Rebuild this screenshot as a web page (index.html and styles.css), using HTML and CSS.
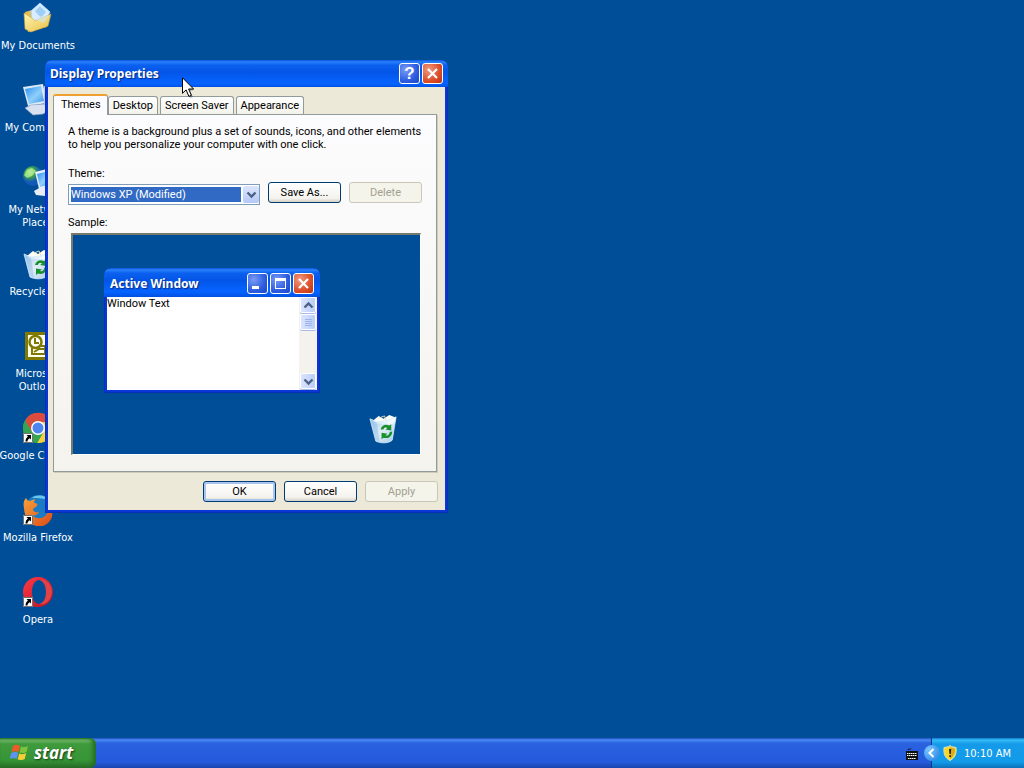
FILE: index.html
```html
<!DOCTYPE html>
<html lang="en">
<head>
<meta charset="utf-8">
<title>Display Properties</title>
<link rel="stylesheet" href="styles.css">
</head>
<body>
<svg class="defs" aria-hidden="true">
  <defs>
    <linearGradient id="screen" x1="0" y1="0" x2="1" y2="1"><stop offset="0" stop-color="#2b8cf0"/><stop offset=".55" stop-color="#8fd0fb"/><stop offset="1" stop-color="#3a90e6"/></linearGradient>
    <linearGradient id="folder" x1="0" y1="0" x2="1" y2="1"><stop offset="0" stop-color="#fff6b0"/><stop offset="1" stop-color="#eabf45"/></linearGradient>
    <linearGradient id="glass" x1="0" y1="0" x2="1" y2="1"><stop offset="0" stop-color="#a9d3f3"/><stop offset=".5" stop-color="#f4fbff"/><stop offset="1" stop-color="#b0d4ee"/></linearGradient>
    <radialGradient id="earth" cx=".35" cy=".3"><stop offset="0" stop-color="#b5f0a0"/><stop offset=".5" stop-color="#3fa04a"/><stop offset="1" stop-color="#1259b8"/></radialGradient>
    <linearGradient id="fox" x1="0" y1="0" x2="1" y2="1"><stop offset="0" stop-color="#f6a13a"/><stop offset="1" stop-color="#dc4a18"/></linearGradient>
    <linearGradient id="opera" x1="0" y1="0" x2="1" y2="1"><stop offset="0" stop-color="#ff3a48"/><stop offset="1" stop-color="#b80f22"/></linearGradient>
    <symbol id="shortcut" viewBox="0 0 10 10"><path d="M0 0h10v10H0z" fill="#fff"/><path d="M.5 .5h9v9h-9z" fill="none" stroke="#111" stroke-width=".6"/><path d="M3.500 2h4.500v4.500L6.700 5.200C5 6 4.600 7 4.500 8.500H2.500C2.500 6 3.500 4.500 4.900 3.400z" fill="#000"/></symbol>
    <symbol id="bin" viewBox="0 0 32 32">
      <path d="M5 8l6-5 5 3 6-4 7 3-2 6H6z" fill="#fffef4"/>
      <path d="M12 5l5-2 2 5" stroke="#e6d7b5" fill="none"/>
      <path d="M2 6l7 3 9-1 11-4-4 24c-3 3-11 4-17 1z" fill="url(#glass)" fill-opacity=".92" stroke="#d6efff" stroke-width=".8"/>
      <path d="M3 7l5 21 4 2-3-20z" fill="#80b5e0" opacity=".4"/>
      <path d="M13 17c1-4 5-6 9-4l2-1.500v6.500l-6-1 2-1.500c-2-1-3.500-.5-4 1.500zM25 19c0 5-4 8-9 6.500L14 27v-6.500l6 1-2 1.500c2 .8 4-.5 4.500-3.500z" fill="#18902c"/>
    </symbol>
    <symbol id="cross" viewBox="0 0 19 19"><path d="M5 5l9 9M14 5l-9 9" stroke="#fff" stroke-width="2.200" fill="none"/></symbol>
    <symbol id="down" viewBox="0 0 13 13"><path d="M2.500 4.500l4 4 4-4" fill="none" stroke="#4d6185" stroke-width="2.400"/></symbol>
    <symbol id="up" viewBox="0 0 13 13"><path d="M2.500 8.500l4-4 4 4" fill="none" stroke="#4d6185" stroke-width="2.400"/></symbol>
  </defs>
</svg>
<div class="screen">
  <main class="desktop">
    <nav class="icons" aria-label="Desktop">
      <a class="icon" href="#documents">
        <svg viewBox="0 0 32 32"><path d="M3 10l7-2 3 3 13-4-1 18L6 30z" fill="#e8bd4b"/><path d="M9 9l9-8 10 9-8 14-10-3z" fill="#d8edff" stroke="#a8d0f4"/><path d="M13 9l5-5 6 6-5 6z" fill="#9fcdf6"/><path d="M2 11l8 5 3 3 16-7-3 12-17 6-6-3z" fill="url(#folder)" stroke="#cfa337" stroke-width=".6"/><path d="M11 17l8-3 8-1-5 8z" fill="#d3e7f4" opacity=".6"/></svg>
        <span>My Documents</span>
      </a>
      <a class="icon" href="#computer">
        <svg viewBox="0 0 32 32"><path d="M1 3l20-3 4 19-19 3z" fill="#dceaf7"/><path d="M3 5l16-3 3 15-15 3z" fill="url(#screen)"/><path d="M3 24l6-3 13-1 7 5-8 5-10 1z" fill="#d9e1f0" stroke="#8ea4c4" stroke-width=".6"/><path d="M22 2l6 2v20l-6-4z" fill="#b9c9df"/></svg>
        <span>My Computer</span>
      </a>
      <a class="icon" href="#network">
        <svg viewBox="0 0 32 32"><circle cx="11" cy="10" r="10" fill="url(#earth)"/><path d="M5 4l5-2 4 3-4 5-5 2-3-3z" fill="#b1ee93" opacity=".8"/><path d="M13 6l16-4 2 18-14 3z" fill="#e4f0fb"/><path d="M15 8l12-3 2 13-11 3z" fill="url(#screen)"/><path d="M12 25l7-4 10 1 2 5-8 3-9-1z" fill="#e8ecf7"/></svg>
        <span>My Network Places</span>
      </a>
      <a class="icon" href="#bin">
        <svg viewBox="0 0 32 32"><use href="#bin"/></svg>
        <span>Recycle Bin</span>
      </a>
      <a class="icon" href="#outlook">
        <svg viewBox="0 0 32 32"><path d="M3 2h28v28H3z" fill="#807a00"/><path d="M6 5h22v22H6z" fill="#fffff0"/><circle cx="13.500" cy="12" r="6" fill="#fff" stroke="#807a00" stroke-width="2.500"/><path d="M13 8v5h4" fill="none" stroke="#807a00" stroke-width="2"/><path d="M10 18v6h13v-8h-4M12 22l5-3h8" fill="none" stroke="#807a00" stroke-width="2"/></svg>
        <span>Microsoft Outlook</span>
      </a>
      <a class="icon" href="#chrome">
        <svg viewBox="0 0 32 32"><circle cx="16" cy="16" r="15" fill="#35a552"/><path d="M3 8.500A15 15 0 0 1 30 10H16z" fill="#dd4b3e"/><path d="M3 8.500L10 20l6-10z" fill="#dd4b3e"/><path d="M30 10H17l5 9-7 12A15 15 0 0 0 30 10z" fill="#f9cf3e"/><path d="M3 8.500A15 15 0 0 0 15 31l6-10-11 0z" fill="#35a552"/><circle cx="16" cy="16" r="7" fill="#fff"/><circle cx="16" cy="16" r="5.500" fill="#4d86ee"/><use href="#shortcut" x="1" y="21" width="10" height="10"/></svg>
        <span>Google Chrome</span>
      </a>
      <a class="icon" href="#firefox">
        <svg viewBox="0 0 32 32"><circle cx="17" cy="15" r="14" fill="#1b7cc4"/><path d="M10 4c5-4 14-3 17 3-5-3-10-3-17-3z" fill="#69c7ec"/><path d="M2 14C1 9 2 6 4 4c1 2 2 3 4 3l5-2-1 4c3 0 4 1 3 3l-4 3c0 2 2 4 6 3-1 3-5 4-7 3 4 5 12 4 15-1 2-4 2-7 1-10 5 5 6 13 1 18-8 9-24 4-25-14z" fill="url(#fox)"/><use href="#shortcut" x="1" y="21" width="10" height="10"/></svg>
        <span>Mozilla Firefox</span>
      </a>
      <a class="icon" href="#opera">
        <svg viewBox="0 0 32 32"><path fill-rule="evenodd" d="M16 1C7 1 1 8 1 16s6 15 15 15 15-7 15-15S25 1 16 1zm1 3c4 0 7 5 7 12s-3 12-7 12-7-5-7-12 3-12 7-12z" fill="url(#opera)"/><path d="M17 4c6-2 13 4 13 12s-7 14-13 12c5-1 7-6 7-12s-2-11-7-12z" fill="#e14248"/><use href="#shortcut" x="1" y="21" width="10" height="10"/></svg>
        <span>Opera</span>
      </a>
    </nav>

    <section class="window dialog" aria-label="Display Properties">
      <header class="titlebar">
        <h1 class="caption">Display Properties</h1>
        <button class="cap-btn help" aria-label="Help">?</button>
        <button class="cap-btn close" aria-label="Close"><svg viewBox="0 0 19 19"><use href="#cross"/></svg></button>
      </header>
      <div class="dialog-body">
        <div class="tabs" role="tablist">
          <button class="tab active" role="tab" aria-selected="true">Themes</button>
          <button class="tab" role="tab">Desktop</button>
          <button class="tab" role="tab">Screen Saver</button>
          <button class="tab" role="tab">Appearance</button>
        </div>
        <div class="panel" role="tabpanel">
          <p class="intro">A theme is a background plus a set of sounds, icons, and other elements<br>to help you personalize your computer with one click.</p>
          <label class="field-label" for="theme">Theme:</label>
          <div class="theme-row">
            <div class="combo">
              <select id="theme"><option>Windows XP (Modified)</option></select>
              <span class="arrow"><svg viewBox="0 0 13 13"><use href="#down"/></svg></span>
            </div>
            <button class="btn">Save As...</button>
            <button class="btn" disabled>Delete</button>
          </div>
          <p class="field-label">Sample:</p>
          <div class="sample">
            <section class="window mini" aria-label="Active Window">
              <header class="titlebar">
                <h2 class="caption">Active Window</h2>
                <button class="cap-btn" aria-label="Minimize"><svg viewBox="0 0 19 19"><path d="M4 12h7v3H4z" fill="#fff"/></svg></button>
                <button class="cap-btn" aria-label="Maximize"><svg viewBox="0 0 19 19"><path d="M4 4h11v11H4z M5 7v7h9V7z" fill="#fff" fill-rule="evenodd"/></svg></button>
                <button class="cap-btn close" aria-label="Close sample"><svg viewBox="0 0 19 19"><use href="#cross"/></svg></button>
              </header>
              <div class="mini-body">
                <p class="mini-text">Window Text</p>
                <div class="scroll">
                  <span class="scroll-btn"><svg viewBox="0 0 13 13"><use href="#up"/></svg></span>
                  <span class="scroll-btn"><svg viewBox="0 0 13 13"><path d="M3 3.500h7M3 5.500h7M3 7.500h7M3 9.500h7" stroke="#9db4ea"/></svg></span>
                  <span class="scroll-btn last"><svg viewBox="0 0 13 13"><use href="#down"/></svg></span>
                </div>
              </div>
            </section>
            <svg class="sample-bin" viewBox="0 0 32 32"><use href="#bin"/></svg>
          </div>
        </div>
        <footer class="actions">
          <button class="btn default">OK</button>
          <button class="btn">Cancel</button>
          <button class="btn" disabled>Apply</button>
        </footer>
      </div>
    </section>

    <svg class="cursor" viewBox="0 0 13 22"><path d="M3 3l9 10-4 1 3 6-3 1z" fill="#000" opacity=".3"/><path d="M.5 .8v15.500l3.600-3.400 2.800 6.500 2.500-1.100-2.800-6.300h5z" fill="#fff" stroke="#000"/></svg>
  </main>

  <footer class="taskbar">
    <button class="start">
      <svg viewBox="0 0 20 20"><path d="M3 3c3-2 5-1 7 0L8.500 9C6 8 4 8 1.500 9z" fill="#ee5a2c"/><path d="M11 3.500c2 1 4 1 7-.5l-1.500 6c-3 1.500-5 1-7 .5z" fill="#7cc43c"/><path d="M1.200 10c3-1.500 5-1 7 0l-1.500 6c-2-1-4-1.500-7 0z" fill="#5d93f2"/><path d="M9.200 10.500c2 1 4 1 7-.5l-1.500 6c-3 1.500-5 1-7 .5z" fill="#f8ce35"/></svg>
      <span>start</span>
    </button>
    <svg class="keyboard" viewBox="0 0 14 14"><path d="M3 3c0-2 3 0 3-1.500" stroke="#111" fill="none"/><path d="M1 4h12v9H1z" fill="#111"/><path d="M2 6.500h10M2 8.500h10M3 11.500h8" stroke="#fff" stroke-dasharray="1.500 .5"/></svg>
    <div class="tray">
      <button class="expand" aria-label="Show hidden icons"><svg viewBox="0 0 16 16"><path d="M9.500 4L5.500 8l4 4" fill="none" stroke="#fff" stroke-width="2"/></svg></button>
      <svg class="shield" viewBox="0 0 14 16"><path d="M7 .5l1.500 1.200 4.500.8c.5 6-.5 10-6 13C1.500 12.500.5 8.500 1 2.500l4.500-.8z" fill="#f7d728" stroke="#d9e6c8"/><path d="M7 2v12c4-2.500 5.200-6 5-10.500L8.500 2.800z" fill="#d9ad1c"/><path d="M6 4h2.200l-.4 5H6.400zM6.200 10.200h1.800V12H6.200z" fill="#2d2500"/></svg>
      <time class="clock">10:10 AM</time>
    </div>
  </footer>
</div>
</body>
</html>
```

FILE: styles.css
```css
* { box-sizing: border-box; }
html, body { height: 100%; }
body { margin: 0; font: 11px/13px Roboto, "Liberation Sans", sans-serif; color: #000; overflow: hidden; }
h1, h2, p { margin: 0; }
button, select { font: inherit; color: inherit; padding: 0; margin: 0; }
svg { display: block; }
.defs { position: absolute; width: 0; height: 0; }

.screen { height: 100vh; display: flex; flex-direction: column; background: #004e98; }
.desktop { flex: 1; min-height: 0; position: relative; }

.icons { display: flex; flex-direction: column; width: 76px; padding-top: 2px; }
.icon { height: 82px; display: flex; flex-direction: column; align-items: center; gap: 5px; color: #fff; text-decoration: none; text-align: center; font: 11px/13px "DejaVu Sans Condensed", "DejaVu Sans", sans-serif; white-space: nowrap; }
.icon svg { width: 32px; height: 32px; flex: none; }
.icon:nth-child(3) span, .icon:nth-child(5) span { width: 64px; white-space: normal; }

.window { position: absolute; display: flex; flex-direction: column; background: #0b35d6; border-radius: 7px 7px 0 0; box-shadow: inset 0 0 0 1px #0831b8; }
.dialog { left: 45px; top: 60px; width: 403px; padding: 0 3px 3px; }
.titlebar { display: flex; align-items: center; gap: 2px; color: #fff; background: linear-gradient(#0a58dd 0, #2a80fa 2px, #0b61ef 5px, #0455e6 12px, #0560fa 20px, #0663ff 24px, #0150e0 100%); border-radius: 7px 7px 0 0; }
.dialog .titlebar { height: 27px; margin: 0 -3px; padding: 0 5px; }
.caption { flex: 1; font: bold 12px/16px "Noto Sans", "Open Sans", sans-serif; text-shadow: 1px 1px 1px #0a2a80; }
.cap-btn { width: 21px; height: 21px; border: 1px solid #fff; border-radius: 3px; color: #fff; background: radial-gradient(circle at 30% 30%, #7a9cf5, #2c5ce0 60%, #1b48c4); font: bold 17px/19px "Liberation Sans", sans-serif; }
.cap-btn svg { width: 19px; height: 19px; }
.close { background: radial-gradient(circle at 30% 30%, #f09a80, #dc4e28 60%, #b93212); }

.dialog-body { background: #ece9d8; padding: 7px 8px 8px 5px; }
.tabs { display: flex; align-items: flex-end; gap: 2px; height: 20px; }
.tab { height: 18px; padding: 0 4px; border: 1px solid #919b9c; border-bottom: 0; border-radius: 3px 3px 0 0; background: linear-gradient(#fff, #f3f2ea); white-space: nowrap; }
.tab.active { height: 21px; padding: 0 6px 2px 7px; margin: 0 -2px -1px 0; border-top: 2px solid #f0a030; background: #fcfcfe; position: relative; }
.panel { border: 1px solid #919b9c; box-shadow: 1px 1px 0 #cfcbb8; background: linear-gradient(#fcfcfe, #f4f3ee); padding: 10px 14px 16px; }
.intro { white-space: nowrap; margin-bottom: 16px; }
.field-label { display: block; }
.theme-row { display: flex; gap: 8px; align-items: flex-start; margin: 2px 0 11px; }
.combo { flex: 1; position: relative; margin-top: 2px; }
.combo select { display: block; width: 100%; height: 21px; border: 1px solid #7f9db9; border-radius: 0; padding: 2px 18px 2px 2px; color: #fff; background: linear-gradient(#316ac5, #316ac5) content-box, #fff; appearance: none; }
.arrow { position: absolute; right: 1px; top: 2px; width: 16px; height: 17px; display: grid; place-items: center; background: linear-gradient(#dce6fd, #b4c8f6); border-radius: 2px; pointer-events: none; }
.arrow svg, .scroll-btn svg { width: 13px; height: 13px; }
.btn { width: 73px; height: 21px; border: 1px solid #003c74; border-radius: 3px; background: linear-gradient(#fff, #f4f3ee 80%, #d8d0c4); }
.btn.default { box-shadow: inset 0 0 0 2px #a9c4ee; }
.btn:disabled { border-color: #c9c7ba; background: #f5f4ea; color: #a1a192; }
.sample { position: relative; height: 222px; margin: 4px 1px 0 3px; border: 1px solid #fff; border-top: 2px solid #77796c; border-left: 2px solid #77796c; background: #004e98; }
.mini { left: 31px; top: 33px; width: 216px; padding: 0 3px 3px; }
.mini .titlebar { height: 29px; margin: 0 -3px; padding: 2px 6px 0; }
.mini-body { display: flex; height: 93px; background: #fff; }
.mini-text { flex: 1; }
.scroll { width: 18px; background: #f3f2ec; display: flex; flex-direction: column; gap: 1px; padding: 0 1px 1px; }
.scroll-btn { height: 16px; display: grid; place-items: center; border: 1px solid #fff; border-radius: 2px; background: linear-gradient(90deg, #dbe5fd, #bacdf8); box-shadow: 0 1px 0 #a9bce8; }
.scroll-btn.last { margin-top: auto; }
.sample-bin { position: absolute; right: 21px; bottom: 10px; width: 31px; height: 31px; }
.actions { display: flex; justify-content: flex-end; gap: 8px; margin: 9px -1px 0 0; }
.cursor { position: absolute; left: 182px; top: 77px; width: 13px; height: 22px; }

.taskbar { height: 30px; display: flex; align-items: stretch; background: linear-gradient(#1f4fc0 0, #4a8bf5 2px, #2a62e0 5px, #245adb 24px, #1b45ad 100%); }
.start { width: 96px; border: 0; border-radius: 0 6px 6px 0; padding: 0 0 0 10px; display: flex; align-items: center; gap: 4px; color: #fff; background: linear-gradient(#2b7a2b 0, #72bb6c 2px, #3f9a3c 6px, #369536 22px, #286e28 100%); box-shadow: inset -3px 0 4px #236b23; }
.start svg { width: 20px; height: 20px; }
.start span { font: italic bold 17px/22px "Open Sans", sans-serif; text-shadow: 1px 1px 2px #173b12; }
.keyboard { width: 14px; height: 14px; margin: 9px 12px 0 auto; }
.tray { display: flex; align-items: center; padding-right: 13px; background: linear-gradient(#0f78d0 0, #35bdf6 2px, #149ae8 6px, #129be9 24px, #0d70b8 100%); border-left: 1px solid #0c3b8c; }
.expand { width: 16px; height: 16px; margin-left: -8px; border: 0; border-radius: 50%; background: radial-gradient(circle at 30% 30%, #7cc6ff, #1a7ce0); }
.expand svg { width: 16px; height: 16px; }
.shield { width: 14px; height: 16px; margin: 0 7px 0 3px; }
.clock { color: #fff; font: 11px/13px "DejaVu Sans Condensed", "DejaVu Sans", sans-serif; }
```
